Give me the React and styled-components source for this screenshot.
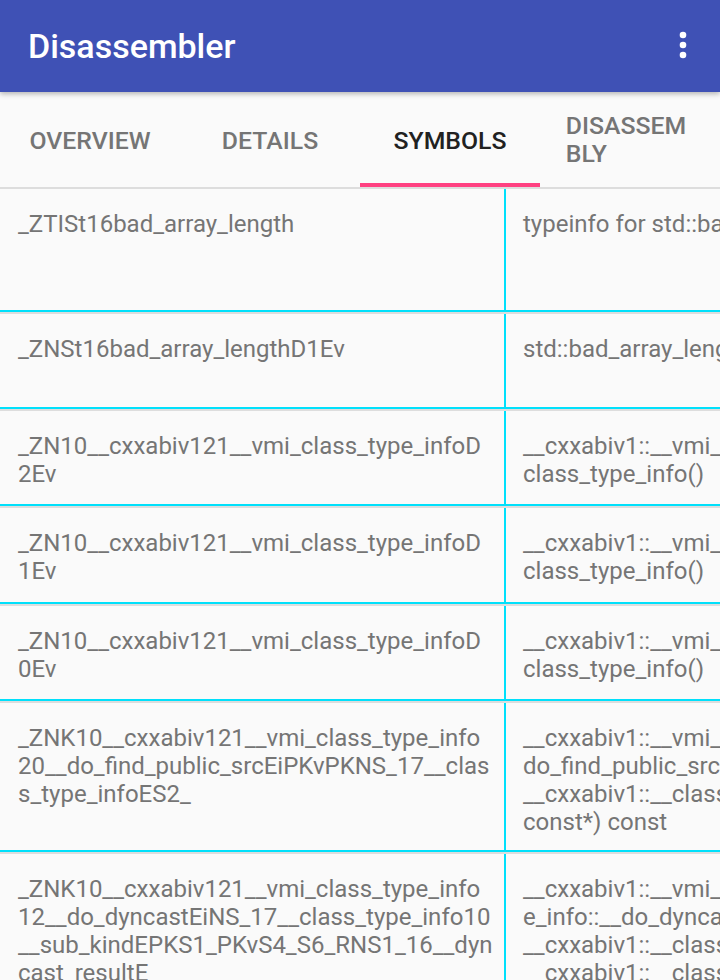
import React from "react";
import styled, { createGlobalStyle } from "styled-components";

const GlobalStyle = createGlobalStyle`
  html, body {
    margin: 0;
    padding: 0;
    background: #fafafa;
    overflow: hidden;
  }
  body {
    font-family: Roboto, "Noto Sans", "Liberation Sans", sans-serif;
  }
`;

const Screen = styled.div`
  width: 720px;
  height: 980px;
  overflow: hidden;
  display: flex;
  flex-direction: column;
  background: #fafafa;
`;

const AppBar = styled.header`
  position: relative;
  z-index: 2;
  flex: 0 0 92px;
  height: 92px;
  box-sizing: border-box;
  display: flex;
  align-items: center;
  justify-content: space-between;
  padding: 0 25px 0 28px;
  background: #3f51b5;
  box-shadow: 0 2px 5px rgba(0, 0, 0, 0.28);
`;

const Title = styled.h1`
  margin: 0;
  font-family: Roboto, "Liberation Sans", sans-serif;
  font-size: 34px;
  line-height: 34px;
  font-weight: 500;
  color: #ffffff;
`;

const MenuButton = styled.button`
  border: 0;
  padding: 0;
  margin: -2px 0 0 0;
  background: transparent;
  display: flex;
  align-items: center;
  justify-content: center;
`;

const TabBar = styled.nav`
  flex: 0 0 auto;
  height: 97px;
  box-sizing: border-box;
  display: grid;
  grid-template-columns: repeat(4, 180px);
  background: #fafafa;
  border-bottom: 2px solid #dddddd;
`;

const Tab = styled.div`
  position: relative;
  display: flex;
  align-items: center;
  justify-content: center;
  font-family: Roboto, "Liberation Sans", sans-serif;
  font-size: 24.8px;
  line-height: 28px;
  font-weight: 500;
  color: ${(p) => (p.$active ? "#212121" : "#757575")};

  &::after {
    content: "";
    display: ${(p) => (p.$active ? "block" : "none")};
    position: absolute;
    left: 0;
    right: 0;
    bottom: 0;
    height: 4px;
    background: #ff4081;
  }
`;

const TabLabel = styled.span`
  display: inline-block;
  text-align: left;
  margin-top: ${(p) => (p.$multi ? "0" : "2px")};
  margin-left: ${(p) => (p.$multi ? "-8px" : "0")};
`;

const Table = styled.div`
  flex: 1 1 auto;
  display: flex;
  flex-direction: column;
  gap: 2px;
  background: #dddddd;
  overflow: hidden;
`;

const Row = styled.div`
  flex: 0 0 auto;
  display: grid;
  grid-template-columns: 506px 560px;
  box-sizing: border-box;
  height: ${(p) => (p.$h ? `${p.$h}px` : "auto")};
  background: #fafafa;
  border-bottom: 2px solid #00e0fb;
`;

const Cell = styled.div`
  box-sizing: border-box;
  padding: 21px 10px 14px ${(p) => (p.$first ? "18px" : "17px")};
  border-right: ${(p) => (p.$first ? "2px solid #00e0fb" : "0")};
  font-family: Roboto, "Liberation Sans", sans-serif;
  font-size: 24px;
  line-height: 28px;
  font-weight: 400;
  color: #757575;
  overflow: hidden;
`;

const Line = styled.span`
  display: block;
  white-space: nowrap;
`;

const DotsIcon = () => (
  <svg width="24" height="30" viewBox="0 0 24 30" aria-hidden="true">
    <circle cx="12" cy="5" r="3.3" fill="#ffffff" />
    <circle cx="12" cy="15" r="3.3" fill="#ffffff" />
    <circle cx="12" cy="25" r="3.3" fill="#ffffff" />
  </svg>
);

const rows = [
  {
    h: 123,
    name: ["_ZTISt16bad_array_length"],
    demangled: ["typeinfo for std::bad_array_length"],
  },
  {
    h: 95,
    name: ["_ZNSt16bad_array_lengthD1Ev"],
    demangled: ["std::bad_array_length::~bad_array_length()"],
  },
  {
    h: 95,
    name: ["_ZN10__cxxabiv121__vmi_class_type_infoD", "2Ev"],
    demangled: ["__cxxabiv1::__vmi_class_type_info::~__vmi_", "class_type_info()"],
  },
  {
    h: 96,
    name: ["_ZN10__cxxabiv121__vmi_class_type_infoD", "1Ev"],
    demangled: ["__cxxabiv1::__vmi_class_type_info::~__vmi_", "class_type_info()"],
  },
  {
    h: 95,
    name: ["_ZN10__cxxabiv121__vmi_class_type_infoD", "0Ev"],
    demangled: ["__cxxabiv1::__vmi_class_type_info::~__vmi_", "class_type_info()"],
  },
  {
    h: 149,
    name: [
      "_ZNK10__cxxabiv121__vmi_class_type_info",
      "20__do_find_public_srcEiPKvPKNS_17__clas",
      "s_type_infoES2_",
    ],
    demangled: [
      "__cxxabiv1::__vmi_class_type_info::__",
      "do_find_public_src(long, void const*,",
      "__cxxabiv1::__class_type_info const*, void",
      "const*) const",
    ],
  },
  {
    h: null,
    name: [
      "_ZNK10__cxxabiv121__vmi_class_type_info",
      "12__do_dyncastEiNS_17__class_type_info10",
      "__sub_kindEPKS1_PKvS4_S6_RNS1_16__dyn",
      "cast_resultE",
    ],
    demangled: [
      "__cxxabiv1::__vmi_class_typ",
      "e_info::__do_dyncast(long, __cxxabiv1::__",
      "__cxxabiv1::__class_type_info::__sub_kind,",
      "__cxxabiv1::__class_type_info const*, void",
      "const*, __cxxabiv1::__class_type_info const*,",
    ],
  },
];

const tabs = [
  { key: "overview", label: ["OVERVIEW"] },
  { key: "details", label: ["DETAILS"] },
  { key: "symbols", label: ["SYMBOLS"], active: true },
  { key: "disassembly", label: ["DISASSEM", "BLY"] },
];

export default function App() {
  return (
    <>
      <GlobalStyle />
      <Screen>
        <AppBar>
          <Title>Disassembler</Title>
          <MenuButton aria-label="More options">
            <DotsIcon />
          </MenuButton>
        </AppBar>
        <TabBar>
          {tabs.map((t) => (
            <Tab key={t.key} $active={t.active}>
              <TabLabel $multi={t.label.length > 1}>
                {t.label.map((l, i) => (
                  <Line key={i}>{l}</Line>
                ))}
              </TabLabel>
            </Tab>
          ))}
        </TabBar>
        <Table>
          {rows.map((r, idx) => (
            <Row key={idx} $h={r.h}>
              <Cell $first>
                {r.name.map((l, i) => (
                  <Line key={i}>{l}</Line>
                ))}
              </Cell>
              <Cell>
                {r.demangled.map((l, i) => (
                  <Line key={i}>{l}</Line>
                ))}
              </Cell>
            </Row>
          ))}
        </Table>
      </Screen>
    </>
  );
}
